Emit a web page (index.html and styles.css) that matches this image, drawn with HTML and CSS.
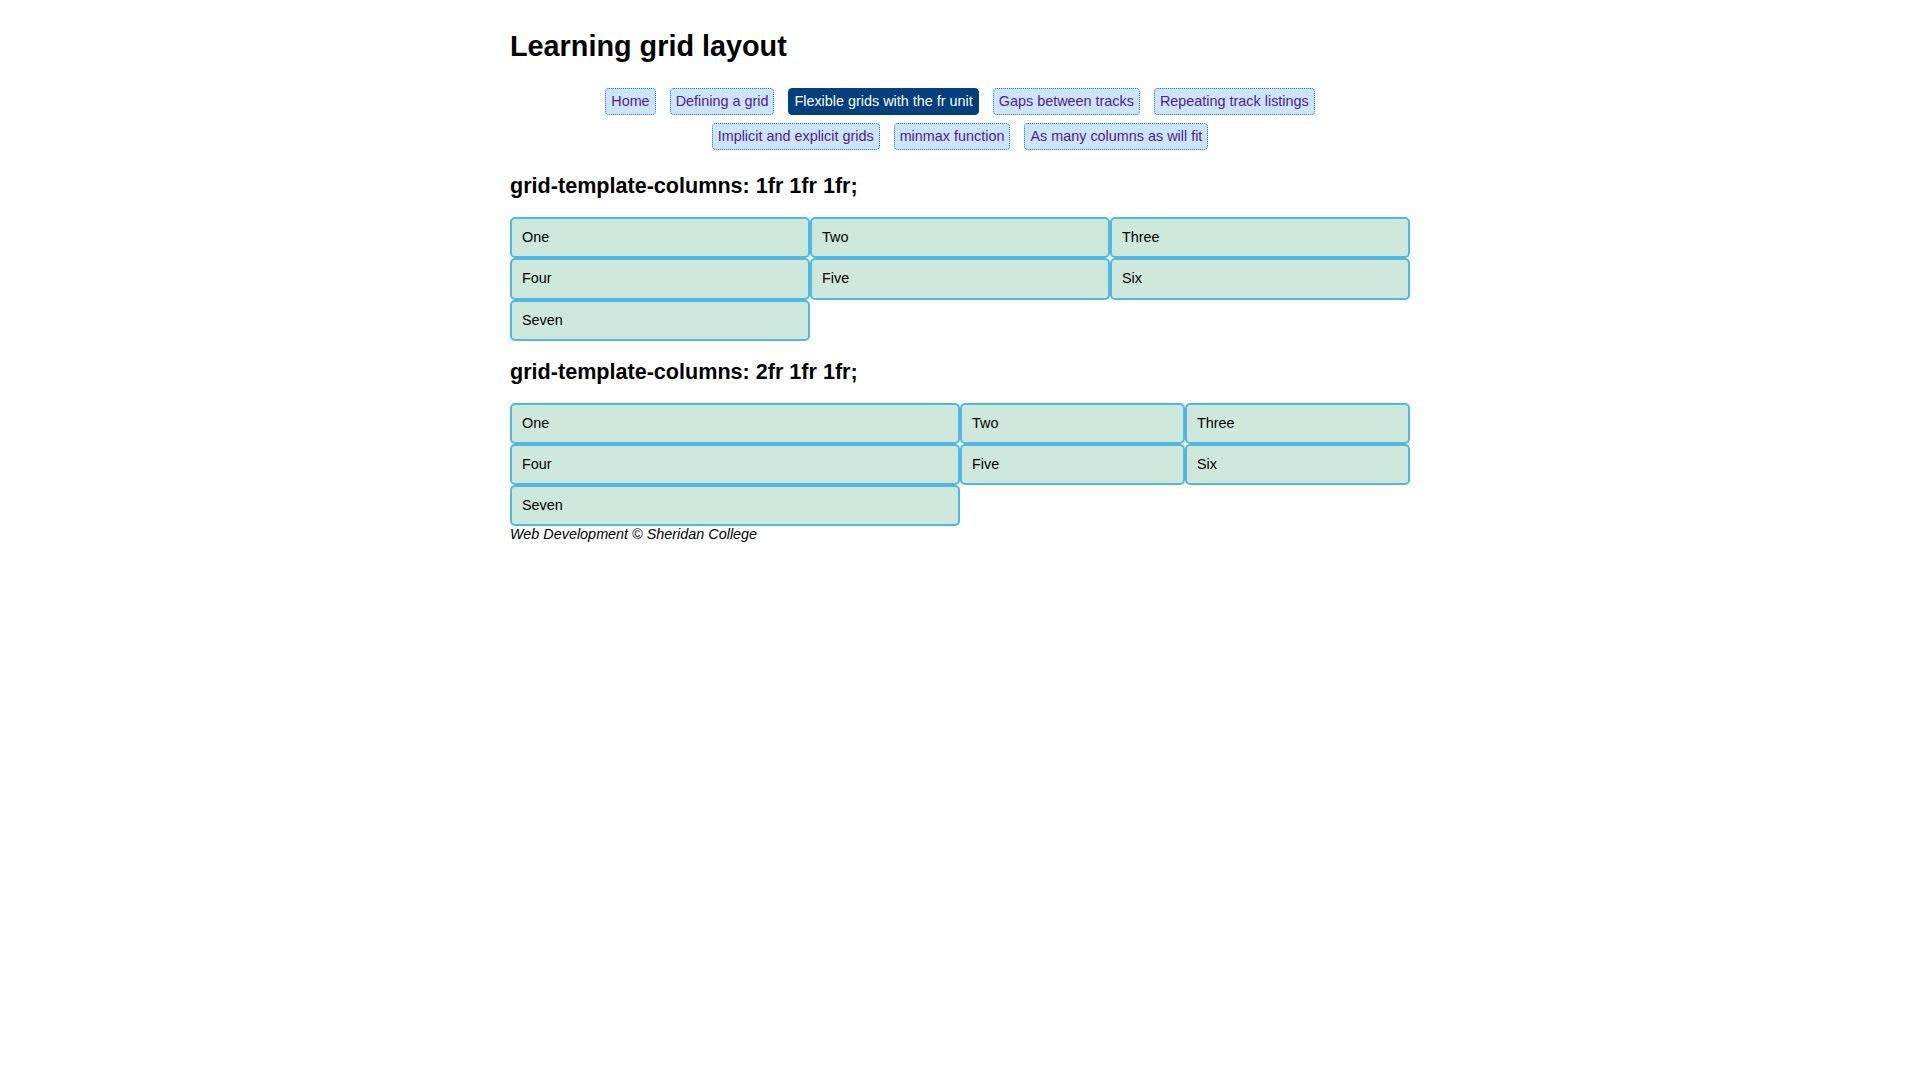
FILE: index.html
```html
<!DOCTYPE html>
<html lang="en">
<head>
<meta charset="utf-8">
<title>Flexible grids with the fr unit</title>
<link rel="stylesheet" href="styles.css">
</head>
<body>
<h1>Learning grid layout</h1>
<nav class="nav">
  <a class="nav-link" href="#">Home</a>
  <a class="nav-link" href="#">Defining a grid</a>
  <a class="nav-link active" href="#">Flexible grids with the fr unit</a>
  <a class="nav-link" href="#">Gaps between tracks</a>
  <a class="nav-link" href="#">Repeating track listings</a>
  <a class="nav-link" href="#">Implicit and explicit grids</a>
  <a class="nav-link" href="#">minmax function</a>
  <a class="nav-link" href="#">As many columns as will fit</a>
</nav>

<h2>grid-template-columns: 1fr 1fr 1fr;</h2>
<div class="container equal">
  <div class="cell">One</div>
  <div class="cell">Two</div>
  <div class="cell">Three</div>
  <div class="cell">Four</div>
  <div class="cell">Five</div>
  <div class="cell">Six</div>
  <div class="cell">Seven</div>
</div>

<h2>grid-template-columns: 2fr 1fr 1fr;</h2>
<div class="container wide-first">
  <div class="cell">One</div>
  <div class="cell">Two</div>
  <div class="cell">Three</div>
  <div class="cell">Four</div>
  <div class="cell">Five</div>
  <div class="cell">Six</div>
  <div class="cell">Seven</div>
</div>
<footer class="footer">Web Development &copy; Sheridan College</footer>
</body>
</html>
```

FILE: styles.css
```css
html {
  background: #ffffff;
}

body {
  width: 90%;
  max-width: 900px;
  margin: 2em auto;
  font: 0.9em/1.2 "Liberation Sans", Arial, Helvetica, sans-serif;
  color: #000000;
}

h1 {
  font-size: 2em;
  font-weight: bold;
  margin: 0 0 0.67em;
}

h2 {
  font-size: 1.5em;
  font-weight: bold;
  margin: 0.83em 0;
}

.nav {
  display: flex;
  flex-wrap: wrap;
  justify-content: center;
  padding: 1px 0 1px;
}

.nav-link {
  display: block;
  margin: 4px 7px;
  padding: 4px 5px;
  border: 1px dotted #1f6fd0;
  border-radius: 4px;
  background: #cce5ff;
  color: #551a8b;
  text-decoration: none;
}

.nav-link.active {
  background: #00407f;
  border: 1px solid #00407f;
  color: #ffffff;
}

.container {
  display: grid;
}

.equal {
  grid-template-columns: 1fr 1fr 1fr;
}

.wide-first {
  grid-template-columns: 2fr 1fr 1fr;
}

.cell {
  border-radius: 5px;
  padding: 10px;
  background-color: rgb(207, 232, 220);
  border: 2px solid rgb(79, 185, 227);
}

.footer {
  font-style: italic;
}
```
